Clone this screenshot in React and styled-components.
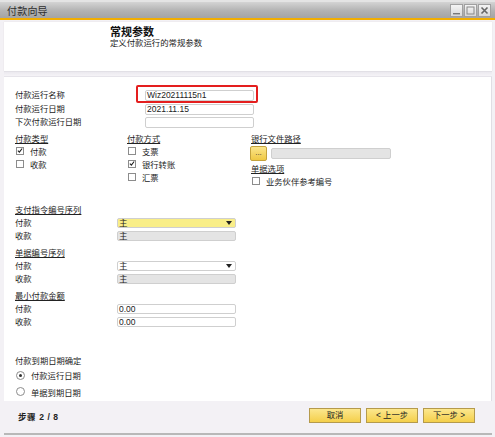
import React from "react";
import styled, { createGlobalStyle } from "styled-components";

const Global = createGlobalStyle`
  html, body { margin: 0; padding: 0; background: #ffffff; }
  body { font-family: "Liberation Sans", "Noto Sans CJK SC", sans-serif; }
  * { box-sizing: border-box; }
`;

const FONT = `"Liberation Sans", "Noto Sans CJK SC", sans-serif`;

const Window = styled.div`
  width: 495px;
  height: 437px;
  display: flex;
  flex-direction: column;
  background: #f3f1f5;
  border-top: 2px solid #e4e4e4;
  font-family: ${FONT};
  color: #222;
`;

const TitleBar = styled.div`
  height: 16px;
  flex: none;
  display: flex;
  align-items: center;
  justify-content: space-between;
  padding: 0 4px 0 7px;
  background: linear-gradient(#d4d4d4, #b2b2b2 55%, #a4a4a4);
  border-bottom: 2px solid #f2ae00;
  box-sizing: content-box;
`;

const TitleText = styled.span`
  font-size: 10px;
  color: #2e2e2e;
  letter-spacing: 0.2px;
`;

const Controls = styled.div`
  display: flex;
  gap: 1px;
`;

const CtrlBtn = styled.div`
  width: 13px;
  height: 13px;
  border: 1px solid #a0a0a0;
  background: linear-gradient(#f4f4f4, #d8d8d8);
  display: flex;
  align-items: center;
  justify-content: center;
`;

const Body = styled.div`
  flex: 1;
  display: flex;
  flex-direction: column;
  padding: 2px 3px 0 4px;
  min-height: 0;
`;

const Header = styled.div`
  height: 49px;
  flex: none;
  background: #ffffff;
  padding: 4px 0 0 106px;
  box-shadow: 0 0 1px #d8d6dc;
`;

const HeaderTitle = styled.div`
  font-size: 11px;
  font-weight: bold;
  line-height: 12px;
  color: #111;
`;

const HeaderSub = styled.div`
  font-size: 8.4px;
  line-height: 11px;
  color: #222;
`;

const Separator = styled.div`
  height: 6px;
  flex: none;
  border-top: 1px solid #e2e0e6;
  border-bottom: 1px solid #e6e4ea;
  background: linear-gradient(#ebe9ef, #f5f3f7);
`;

const Content = styled.div`
  height: 324px;
  flex: none;
  background: #ffffff;
  padding: 13px 0 0 11px;
  display: flex;
  flex-direction: column;
  border-right: 1px solid #e0dee4;
`;

const TopGrid = styled.div`
  display: grid;
  grid-template-columns: 130px 109px;
  grid-auto-rows: 11px;
  row-gap: 2.5px;
  align-items: center;
`;

const Label = styled.span`
  font-size: 8.3px;
  line-height: 11px;
  color: #222;
  white-space: nowrap;
`;

const FieldWrap = styled.div`
  position: relative;
  height: 11px;
`;

const Field = styled.div`
  height: ${(p) => p.$h || 11}px;
  border: 1px solid #cfcfcf;
  border-radius: 2px;
  background: ${(p) =>
    p.$bg === "yellow" ? "#f9ee88" : p.$bg === "grey" ? "#e4e4e4" : "#ffffff"};
  font-size: 8.5px;
  line-height: ${(p) => (p.$h || 11) - 2}px;
  padding-left: 1px;
  color: #222;
  display: flex;
  align-items: center;
  justify-content: space-between;
  padding-right: 3px;
  font-family: "Liberation Sans", "Noto Sans CJK SC", sans-serif;
`;

const Highlight = styled.div`
  position: absolute;
  left: -9px;
  top: -5px;
  right: -4px;
  bottom: -2px;
  border: 2px solid #e41e1e;
  border-radius: 2px;
  pointer-events: none;
`;

const Options = styled.div`
  margin-top: 6px;
  display: grid;
  grid-template-columns: 112px 124px auto;
`;

const Column = styled.div`
  display: flex;
  flex-direction: column;
`;

const Heading = styled.div`
  font-size: 8.3px;
  line-height: ${(p) => p.$h || 10}px;
  height: ${(p) => p.$h || 10}px;
  text-decoration: underline;
  color: #222;
  margin-top: ${(p) => p.$mt || 0}px;
  white-space: nowrap;
`;

const CheckRow = styled.label`
  height: 13px;
  display: flex;
  align-items: center;
  gap: 6px;
  padding-left: 1px;
  font-size: 8.3px;
  color: #222;
`;

const Box = styled.span`
  width: 8px;
  height: 8px;
  border: 1px solid #8c8c8c;
  background: #fff;
  display: flex;
  align-items: center;
  justify-content: center;
  flex: none;
`;

const PathRow = styled.div`
  height: 16px;
  margin-top: 1px;
  display: flex;
  align-items: center;
  gap: 4px;
  margin-left: -1px;
`;

const DotsBtn = styled.div`
  width: 17px;
  height: 15px;
  border: 1px solid #c4a23c;
  border-radius: 2px;
  background: linear-gradient(#fbe58c, #efc843);
  font-size: 8px;
  line-height: 11px;
  text-align: center;
  color: #333;
`;

const PathField = styled.div`
  width: 120px;
  height: 11px;
  border: 1px solid #cfcfcf;
  border-radius: 2px;
  background: #e4e4e4;
`;

const Section = styled.div`
  display: flex;
  flex-direction: column;
  margin-top: ${(p) => p.$mt || 0}px;
`;

const SeqRow = styled.div`
  height: 13px;
  display: grid;
  grid-template-columns: 102px 119px;
  align-items: center;
`;

const Arrow = styled.span`
  width: 0;
  height: 0;
  border-left: 3px solid transparent;
  border-right: 3px solid transparent;
  border-top: 4px solid #222;
`;

const RadioRow = styled.label`
  height: 16.5px;
  display: flex;
  align-items: center;
  gap: 6px;
  padding-left: 1px;
  font-size: 8.3px;
  color: #222;
`;

const Radio = styled.span`
  width: 9px;
  height: 9px;
  border-radius: 50%;
  border: 1px solid #8c8c8c;
  background: #fff;
  display: flex;
  align-items: center;
  justify-content: center;
  &::after {
    content: "";
    width: 3px;
    height: 3px;
    border-radius: 50%;
    background: ${(p) => (p.$on ? "#333" : "transparent")};
  }
`;

const Footer = styled.div`
  height: 34px;
  flex: none;
  display: flex;
  align-items: center;
  justify-content: space-between;
  padding: 0 17px 3px 14px;
  border-bottom: 2px solid #b8b8b8;
`;

const Step = styled.span`
  font-size: 8.5px;
  font-weight: bold;
  color: #222;
  letter-spacing: 0.6px;
`;

const Buttons = styled.div`
  display: flex;
  gap: 5px;
`;

const Btn = styled.div`
  width: 52px;
  height: 15px;
  border: 1px solid #b59a4c;
  background: linear-gradient(#fce78e, #f4cf4a);
  font-size: 8.3px;
  line-height: 13px;
  text-align: center;
  color: #222;
`;

const Check = () => (
  <svg width="7" height="7" viewBox="0 0 7 7">
    <path d="M1 3.6 L2.8 5.4 L6 1.2" fill="none" stroke="#222" strokeWidth="1.3" />
  </svg>
);

const CheckItem = ({ on, children }) => (
  <CheckRow>
    <Box>{on && <Check />}</Box>
    {children}
  </CheckRow>
);

export default function App() {
  return (
    <>
      <Global />
      <Window>
        <TitleBar>
          <TitleText>付款向导</TitleText>
          <Controls>
            <CtrlBtn>
              <svg width="9" height="9" viewBox="0 0 9 9">
                <rect x="1" y="7" width="7" height="1.4" fill="#777" />
              </svg>
            </CtrlBtn>
            <CtrlBtn>
              <svg width="9" height="9" viewBox="0 0 9 9">
                <rect x="1" y="1" width="7" height="7" fill="none" stroke="#888" strokeWidth="1" />
              </svg>
            </CtrlBtn>
            <CtrlBtn>
              <svg width="9" height="9" viewBox="0 0 9 9">
                <path d="M1.5 1.5 L7.5 7.5 M7.5 1.5 L1.5 7.5" stroke="#666" strokeWidth="1.6" />
              </svg>
            </CtrlBtn>
          </Controls>
        </TitleBar>
        <Body>
          <Header>
            <HeaderTitle>常规参数</HeaderTitle>
            <HeaderSub>定义付款运行的常规参数</HeaderSub>
          </Header>
          <Separator />
          <Content>
            <TopGrid>
              <Label>付款运行名称</Label>
              <FieldWrap>
                <Field>Wiz20211115n1</Field>
                <Highlight />
              </FieldWrap>
              <Label>付款运行日期</Label>
              <Field>2021.11.15</Field>
              <Label>下次付款运行日期</Label>
              <Field />
            </TopGrid>

            <Options>
              <Column>
                <Heading>付款类型</Heading>
                <CheckItem on>付款</CheckItem>
                <CheckItem>收款</CheckItem>
              </Column>
              <Column>
                <Heading>付款方式</Heading>
                <CheckItem>支票</CheckItem>
                <CheckItem on>银行转账</CheckItem>
                <CheckItem>汇票</CheckItem>
              </Column>
              <Column>
                <Heading>银行文件路径</Heading>
                <PathRow>
                  <DotsBtn>...</DotsBtn>
                  <PathField />
                </PathRow>
                <Heading $mt={3}>单据选项</Heading>
                <CheckItem>业务伙伴参考编号</CheckItem>
              </Column>
            </Options>

            <Section $mt={15.5}>
              <Heading $h={14}>支付指令编号序列</Heading>
              <SeqRow>
                <Label>付款</Label>
                <Field $bg="yellow" $h={10}>
                  主<Arrow />
                </Field>
              </SeqRow>
              <SeqRow>
                <Label>收款</Label>
                <Field $bg="grey" $h={10}>主</Field>
              </SeqRow>
            </Section>

            <Section $mt={3}>
              <Heading $h={14}>单据编号序列</Heading>
              <SeqRow>
                <Label>付款</Label>
                <Field $h={10}>
                  主<Arrow />
                </Field>
              </SeqRow>
              <SeqRow>
                <Label>收款</Label>
                <Field $bg="grey" $h={10}>主</Field>
              </SeqRow>
            </Section>

            <Section $mt={3}>
              <Heading $h={14}>最小付款金额</Heading>
              <SeqRow>
                <Label>付款</Label>
                <Field $h={10}>0.00</Field>
              </SeqRow>
              <SeqRow>
                <Label>收款</Label>
                <Field $h={10}>0.00</Field>
              </SeqRow>
            </Section>

            <Section $mt={27.5}>
              <Label>付款到期日期确定</Label>
              <RadioRow>
                <Radio $on />
                付款运行日期
              </RadioRow>
              <RadioRow>
                <Radio />
                单据到期日期
              </RadioRow>
            </Section>
          </Content>
          <Footer>
            <Step>步骤 2 / 8</Step>
            <Buttons>
              <Btn>取消</Btn>
              <Btn>&lt; 上一步</Btn>
              <Btn>下一步 &gt;</Btn>
            </Buttons>
          </Footer>
        </Body>
      </Window>
    </>
  );
}
